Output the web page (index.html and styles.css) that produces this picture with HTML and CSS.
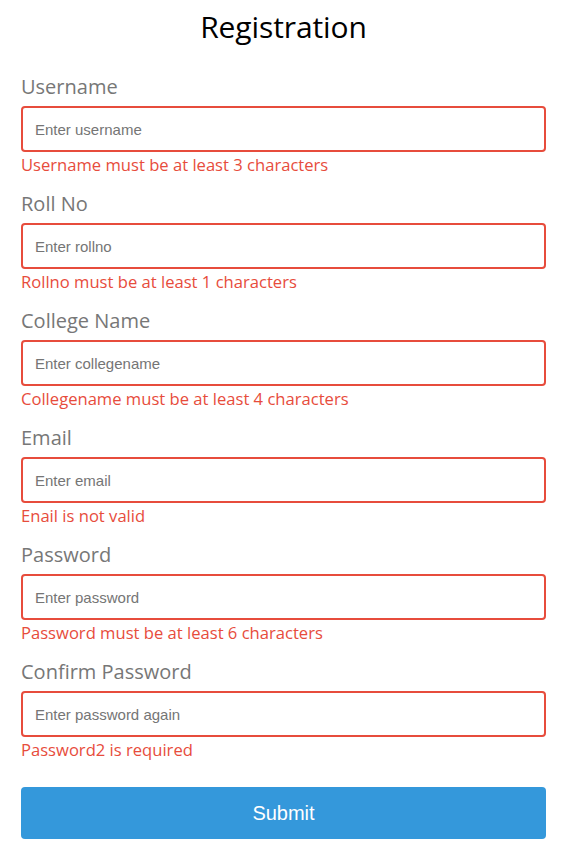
FILE: index.html
```html
<!DOCTYPE html>
<html lang="en">
<head>
<meta charset="UTF-8">
<title>Registration</title>
<link rel="stylesheet" href="styles.css">
</head>
<body>
<div class="container">
  <form class="form">
    <h2 class="title">Registration</h2>
    <div class="form-control error">
      <label class="label" for="username">Username</label>
      <input class="input" type="text" id="username" placeholder="Enter username">
      <small class="msg">Username must be at least 3 characters</small>
    </div>
    <div class="form-control error">
      <label class="label" for="rollno">Roll No</label>
      <input class="input" type="text" id="rollno" placeholder="Enter rollno">
      <small class="msg">Rollno must be at least 1 characters</small>
    </div>
    <div class="form-control error">
      <label class="label" for="collegename">College Name</label>
      <input class="input" type="text" id="collegename" placeholder="Enter collegename">
      <small class="msg">Collegename must be at least 4 characters</small>
    </div>
    <div class="form-control error">
      <label class="label" for="email">Email</label>
      <input class="input" type="text" id="email" placeholder="Enter email">
      <small class="msg">Enail is not valid</small>
    </div>
    <div class="form-control error">
      <label class="label" for="password">Password</label>
      <input class="input" type="password" id="password" placeholder="Enter password">
      <small class="msg">Password must be at least 6 characters</small>
    </div>
    <div class="form-control error">
      <label class="label" for="password2">Confirm Password</label>
      <input class="input" type="password" id="password2" placeholder="Enter password again">
      <small class="msg">Password2 is required</small>
    </div>
    <button class="submit" type="submit">Submit</button>
  </form>
</div>
</body>
</html>
```
FILE: styles.css
```css
* {
  box-sizing: border-box;
}

body {
  margin: 0;
  background: #fff;
  font-family: "Open Sans", "Liberation Sans", sans-serif;
}

.container {
  padding: 6px 20px 0 21px;
}

.form {
  display: flex;
  flex-direction: column;
}

.title {
  margin: 0 0 26px;
  text-align: center;
  font-size: 30px;
  font-weight: 500;
  color: #000;
  line-height: 41px;
  letter-spacing: -0.1px;
}

.form-control {
  display: flex;
  flex-direction: column;
  margin-bottom: 14px;
}

.label {
  display: block;
  font-size: 20px;
  line-height: 27px;
  color: #777;
  margin-bottom: 6px;
}

.input {
  display: block;
  width: 100%;
  height: 46px;
  border: 2px solid #f0f0f0;
  border-radius: 4px;
  padding: 0 12px;
  font-family: "Liberation Sans", Arial, sans-serif;
  font-size: 15px;
  color: #333;
  background: #fff;
  outline: none;
}

.input::placeholder {
  color: #757575;
}

.form-control.error .input {
  border-color: #e74c3c;
}

.msg {
  display: block;
  margin-top: 2px;
  font-size: 16.6px;
  line-height: 22px;
  color: #e74c3c;
}

.submit {
  margin-top: 12px;
  width: 100%;
  height: 52px;
  border: none;
  border-radius: 4px;
  background: #3498db;
  color: #fff;
  font-family: "Liberation Sans", Arial, sans-serif;
  font-size: 20px;
  cursor: pointer;
}
```
